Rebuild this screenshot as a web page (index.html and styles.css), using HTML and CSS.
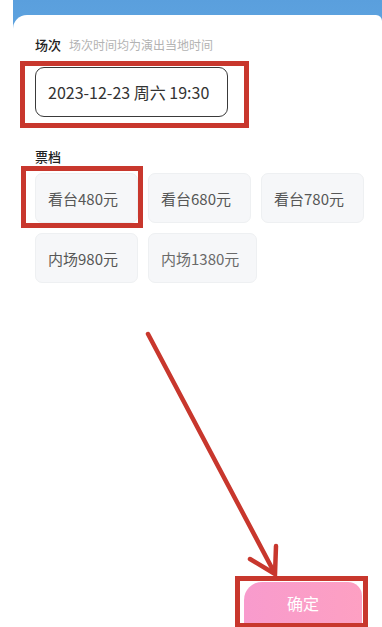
FILE: index.html
```html
<!DOCTYPE html>
<html lang="zh">
<head>
<meta charset="utf-8">
<link rel="stylesheet" href="styles.css">
</head>
<body>
<div class="page">
  <div class="backdrop">
    <div class="sheet">
      <div class="section-title"><span class="label">场次</span><span class="hint">场次时间均为演出当地时间</span></div>
      <div class="date-btn">2023-12-23 周六 19:30<span class="mark mark-date"></span></div>

      <div class="section-title tickets-title"><span class="label">票档</span></div>
      <div class="chips">
        <div class="chip">看台480元<span class="mark mark-chip"></span></div>
        <div class="chip">看台680元</div>
        <div class="chip">看台780元</div>
        <div class="chip">内场980元</div>
        <div class="chip chip-wide chip-muted">内场1380元</div>
      </div>

      <div class="footer">
        <div class="confirm">确定<span class="mark mark-btn"></span></div>
      </div>
    </div>
  </div>
  <svg class="arrow" viewBox="0 0 382 627" width="382" height="627">
    <line x1="148" y1="334" x2="273" y2="570" stroke="#c8372d" stroke-width="4.5" stroke-linecap="round"/>
    <polyline points="250,559 275,574 276,546" fill="none" stroke="#c8372d" stroke-width="4.5" stroke-linejoin="miter" stroke-linecap="round"/>
  </svg>
</div>
</body>
</html>
```
FILE: styles.css
```css
html, body {
  margin: 0;
  padding: 0;
  background: #ffffff;
  height: 627px;
  overflow: hidden;
}
body {
  font-family: "Noto Sans CJK SC", "Noto Sans", sans-serif;
  color: #333;
}
.page {
  position: relative;
  width: 382px;
  height: 627px;
  overflow: hidden;
}
.backdrop {
  margin-left: 13px;
  padding-top: 15px;
  background: linear-gradient(#5a9fdd 0, #5ea3df 30px, #ffffff 30px);
}
.sheet {
  background: #ffffff;
  border-radius: 14px 6px 0 0;
  min-height: 612px;
  box-sizing: border-box;
  padding: 21px 0 0 22px;
  display: flex;
  flex-direction: column;
}
.section-title {
  display: flex;
  align-items: center;
  height: 18px;
  line-height: 18px;
}
.label {
  font-size: 13px;
  font-weight: 500;
  color: #222;
}
.hint {
  font-size: 12px;
  color: #b3b3b3;
  margin-left: 8px;
}
.date-btn {
  position: relative;
  margin-top: 13px;
  width: 193px;
  height: 50px;
  box-sizing: border-box;
  border: 1px solid #3a3a3a;
  border-radius: 9px;
  padding-left: 12px;
  display: flex;
  align-items: center;
  font-size: 16px;
  color: #333;
}
.tickets-title {
  margin-top: 31px;
}
.chips {
  margin-top: 7px;
  display: flex;
  flex-wrap: wrap;
  gap: 10px;
  width: 330px;
}
.chip {
  position: relative;
  width: 103px;
  height: 50px;
  box-sizing: border-box;
  background: #f6f7f9;
  border: 1px solid #eef0f2;
  border-radius: 7px;
  padding-left: 12px;
  display: flex;
  align-items: center;
  font-size: 15px;
  color: #575757;
}
.chip-wide {
  width: 109px;
}
.chip-muted {
  color: #6a6a6a;
}
.footer {
  margin-top: auto;
  display: flex;
  justify-content: flex-end;
  padding-right: 20px;
}
.confirm {
  position: relative;
  width: 118px;
  height: 45px;
  border-radius: 18px 14px 0 0;
  background: linear-gradient(90deg, #f89bcd, #fda0c2);
  color: #ffffff;
  font-size: 16px;
  display: flex;
  align-items: center;
  justify-content: center;
  padding-bottom: 4px;
  box-sizing: border-box;
}
.mark {
  position: absolute;
  border: 5px solid #c8372d;
  pointer-events: none;
}
.mark-date {
  left: -16px;
  top: -7px;
  right: -22px;
  bottom: -12px;
}
.mark-chip {
  left: -15px;
  top: -8px;
  right: -6px;
  bottom: -6px;
}
.mark-btn {
  left: -9px;
  top: -6px;
  right: -6px;
  bottom: -1px;
}
.arrow {
  position: absolute;
  left: 0;
  top: 0;
  pointer-events: none;
}
```
